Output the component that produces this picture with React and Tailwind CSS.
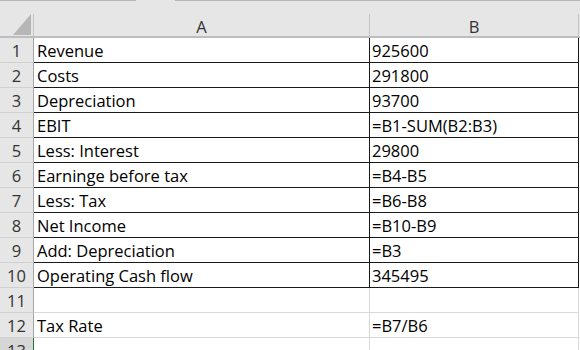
import React from 'react';

const rows = [
    ['Revenue', '925600'],
    ['Costs', '291800'],
    ['Depreciation', '93700'],
    ['EBIT', '=B1-SUM(B2:B3)'],
    ['Less: Interest', '29800'],
    ['Earninge before tax', '=B4-B5'],
    ['Less: Tax', '=B6-B8'],
    ['Net Income', '=B10-B9'],
    ['Add: Depreciation', '=B3'],
    ['Operating Cash flow', '345495'],
    ['', ''],
    ['Tax Rate', '=B7/B6'],
];

const App = () => {
    return (
        <div className="w-[580px] h-[350px] overflow-hidden bg-white font-['Open_Sans',sans-serif] text-[16.5px] text-black">
            {/* Top edge */}
            <div className="flex h-px">
                <div className="w-[136px] bg-[#b4b4b4]" />
                <div className="w-[39px] bg-[#e6e6e6]" />
                <div className="flex-1 bg-[#b4b4b4]" />
            </div>

            {/* Column headers */}
            <div className="flex h-[37px] bg-[#e6e6e6] border-b-2 border-[#bdbdbd]">
                <div className="w-[33px]">
                    <svg width="33" height="35" viewBox="0 0 33 35">
                        <polygon points="31,13 31,34 13,34" fill="#b6b6b6" />
                    </svg>
                </div>
                <div className="w-px mt-[13px] bg-[#c4c4c4]" />
                <div className="w-[335px] text-center text-[#333] leading-[20px] pt-[16px]">A</div>
                <div className="w-px mt-[13px] bg-[#c4c4c4]" />
                <div className="w-[208px] text-center text-[#333] leading-[20px] pt-[16px]">B</div>
                <div className="w-px mt-[13px] bg-[#c4c4c4]" />
            </div>

            {/* Body rows */}
            {rows.map(([label, value], i) => {
                const boxed = i < 10;
                const line = boxed ? 'border-[#1a1a1a]' : 'border-[#d9d9d9]';
                return (
                    <div key={i} className="flex h-[25px]">
                        <div className="w-[34px] box-border border-b border-r border-b-[#d0d0d0] border-r-[#a6a6a6] bg-[#e6e6e6] text-center text-[#333] leading-[20px] pt-[3px]">
                            {i + 1}
                        </div>
                        <div className={`w-[336px] box-border border-b border-r ${line} pl-[3px] leading-[20px] pt-[3px] whitespace-nowrap`}>
                            {label}
                        </div>
                        <div className={`w-[209px] box-border border-b border-r ${line} pl-[2px] leading-[20px] pt-[3px] whitespace-nowrap`}>
                            {value}
                        </div>
                    </div>
                );
            })}

            {/* Row 13, cut off */}
            <div className="flex h-[25px]">
                <div className="w-[34px] box-border border-r border-r-[#217346] bg-[#d6d6d6] text-center text-[#333] leading-[20px] pt-[3px]">
                    13
                </div>
                <div className="w-[336px] box-border border-r border-[#d9d9d9]" />
                <div className="w-[209px] box-border border-r border-[#d9d9d9]" />
            </div>
        </div>
    );
};

export default App;
